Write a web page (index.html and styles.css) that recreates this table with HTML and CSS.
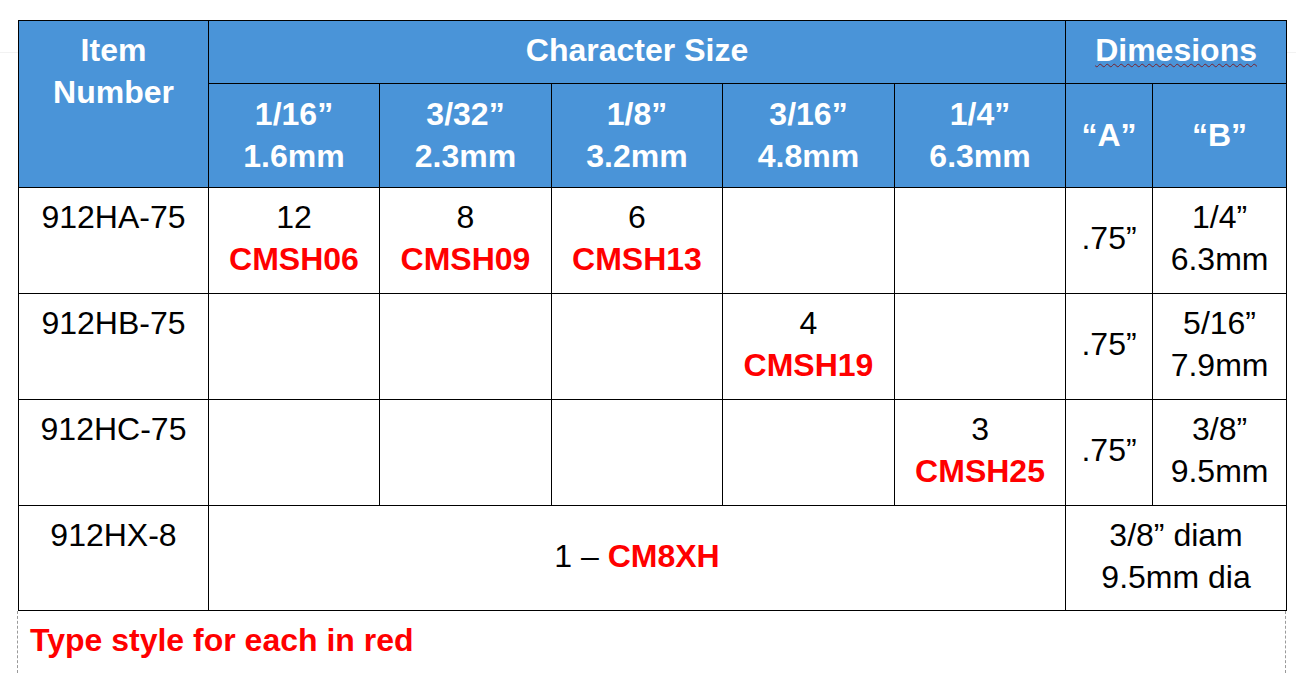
FILE: index.html
```html
<!DOCTYPE html>
<html lang="en">
<head>
<meta charset="utf-8">
<title>Character Size Table</title>
<link rel="stylesheet" href="styles.css">
</head>
<body>
<div class="page">
  <table class="spec">
    <colgroup>
      <col class="c-item">
      <col class="c-a1">
      <col class="c-a2">
      <col class="c-a3">
      <col class="c-a4">
      <col class="c-a5">
      <col class="c-dA">
      <col class="c-dB">
    </colgroup>
    <thead>
      <tr class="h1">
        <th rowspan="2" class="top">Item<br>Number</th>
        <th colspan="5" class="top">Character Size</th>
        <th colspan="2" class="top"><span class="spell">Dimesions</span></th>
      </tr>
      <tr class="h2">
        <th>1/16”<br>1.6mm</th>
        <th>3/32”<br>2.3mm</th>
        <th>1/8”<br>3.2mm</th>
        <th>3/16”<br>4.8mm</th>
        <th>1/4”<br>6.3mm</th>
        <th>“A”</th>
        <th>“B”</th>
      </tr>
    </thead>
    <tbody>
      <tr>
        <td>912HA-75</td>
        <td>12<br><b class="red">CMSH06</b></td>
        <td>8<br><b class="red">CMSH09</b></td>
        <td>6<br><b class="red">CMSH13</b></td>
        <td></td>
        <td></td>
        <td class="mid">.75”</td>
        <td>1/4”<br>6.3mm</td>
      </tr>
      <tr>
        <td>912HB-75</td>
        <td></td>
        <td></td>
        <td></td>
        <td>4<br><b class="red">CMSH19</b></td>
        <td></td>
        <td class="mid">.75”</td>
        <td>5/16”<br>7.9mm</td>
      </tr>
      <tr>
        <td>912HC-75</td>
        <td></td>
        <td></td>
        <td></td>
        <td></td>
        <td>3<br><b class="red">CMSH25</b></td>
        <td class="mid">.75”</td>
        <td>3/8”<br>9.5mm</td>
      </tr>
      <tr>
        <td>912HX-8</td>
        <td colspan="5" class="mid">1 – <b class="red">CM8XH</b></td>
        <td colspan="2">3/8” diam<br>9.5mm dia</td>
      </tr>
    </tbody>
  </table>
  <div class="note">Type style for each in red</div>
</div>
</body>
</html>
```

FILE: styles.css
```css
html, body {
  margin: 0;
  padding: 0;
}

body {
  background: #ffffff linear-gradient(to bottom, transparent 52px, #f2f2f2 52px, #f2f2f2 53px, transparent 53px) no-repeat;
  font-family: "Liberation Sans", Arial, sans-serif;
  color: #000000;
}

.page {
  padding: 20px 0 0 18px;
}

.spec {
  border-collapse: collapse;
  table-layout: fixed;
  width: 1269px;
  font-size: 32px;
  line-height: 41.5px;
  background: #ffffff;
}

.c-item { width: 190px; }
.c-a1 { width: 171px; }
.c-a2 { width: 172px; }
.c-a3 { width: 171px; }
.c-a4 { width: 172px; }
.c-a5 { width: 171px; }
.c-dA { width: 87px; }
.c-dB { width: 134px; }

.spec th,
.spec td {
  border: 1px solid #000000;
  padding: 9px 0 0 0;
  text-align: center;
  vertical-align: top;
}

.spec th {
  background: #4a94d8;
  color: #ffffff;
  font-weight: bold;
}

.h1 { height: 63px; }
.h2 { height: 104px; }
.spec tbody tr { height: 106px; }
.spec tbody tr:last-child { height: 105px; }

.h2 th {
  vertical-align: middle;
  padding: 0;
}

.spec td.mid {
  vertical-align: middle;
  padding: 0 0 3px 0;
}

.red {
  color: #ff0000;
  font-weight: bold;
}

.spell {
  text-decoration: underline wavy #7a1f2a;
  text-decoration-thickness: 1px;
  text-underline-offset: 2px;
}

.note {
  box-sizing: border-box;
  width: 1269px;
  height: 62px;
  margin-left: -1px;
  border-left: 1px dashed #9a9a9a;
  border-right: 1px dashed #9a9a9a;
  padding: 9px 0 0 12px;
  color: #ff0000;
  font-weight: bold;
  font-size: 32px;
  line-height: 41.5px;
}
```
